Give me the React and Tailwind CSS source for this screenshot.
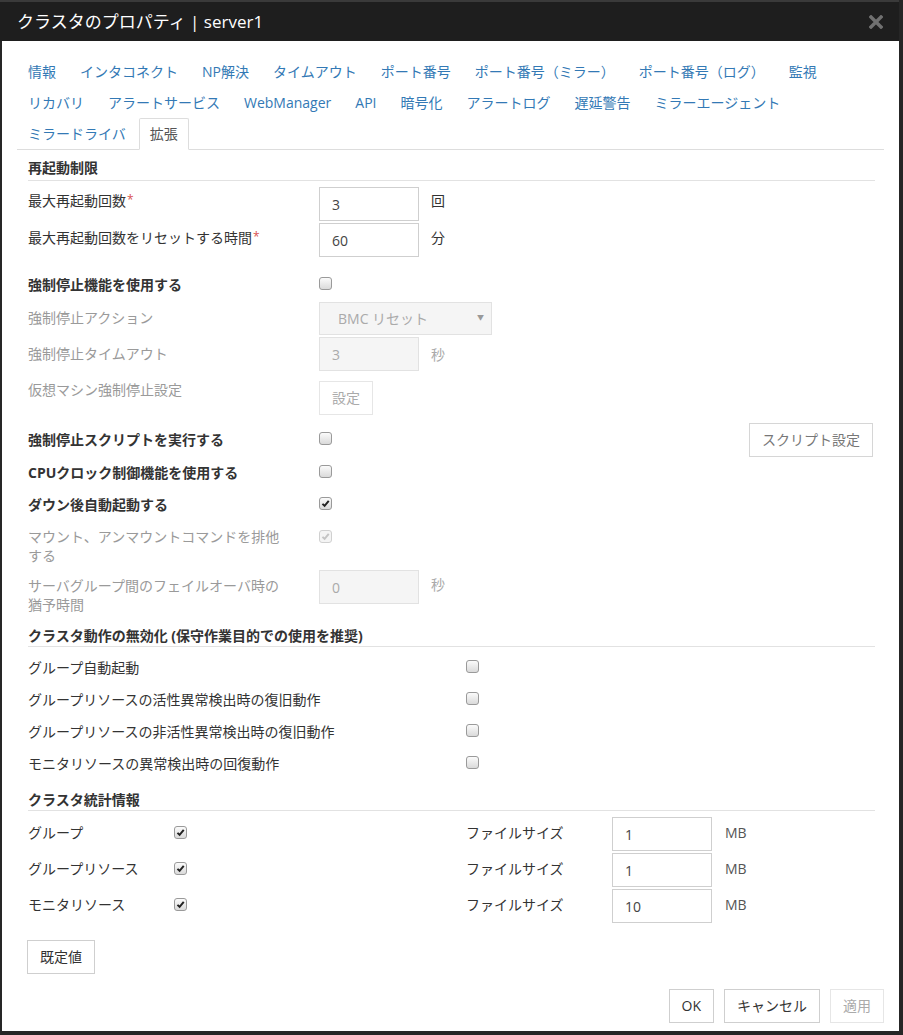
import React from "react";

const font = "font-['Open_Sans','Noto_Sans_CJK_JP',sans-serif]";

const Checkbox = ({ checked, disabled }) => {
  return (
    <span
      className={`inline-flex w-[13px] h-[13px] shrink-0 rounded-[3px] border items-center justify-center ${
        disabled
          ? "border-[#d0d0d0] bg-[#f4f4f4]"
          : "border-[#9a9a9a] bg-linear-to-b from-[#fbfbfb] to-[#dadada]"
      }`}
    >
      {checked && (
        <svg viewBox="0 0 10 10" className="w-[9px] h-[9px]">
          <path
            d="M1.6 5.4 L4 7.6 L8.6 2.2"
            fill="none"
            stroke={disabled ? "#c4c4c4" : "#222"}
            strokeWidth="2.2"
          />
        </svg>
      )}
    </span>
  );
};

const Req = () => (
  <sup className="text-[#d9534f] text-[12px] relative -top-[2px] ml-[1px]">*</sup>
);

const TextBox = ({ value, disabled }) => (
  <div
    className={`w-[100px] h-[34px] border flex items-center pl-[12px] text-[14px] ${
      disabled
        ? "bg-[#f5f5f5] border-[#e2e2e2] text-[#aaa]"
        : "bg-white border-[#cfcfcf] text-[#444]"
    }`}
  >
    {value}
  </div>
);

const Btn = ({ children, disabled, muted, className = "" }) => (
  <button
    className={`h-[34px] px-[12px] border bg-white text-[14px] leading-[20px] ${
      disabled
        ? "border-[#e6e6e6] text-[#aaa]"
        : muted
        ? "border-[#d6d6d6] text-[#777]"
        : "border-[#cfcfcf] text-[#333]"
    } ${className}`}
  >
    {children}
  </button>
);

const Heading = ({ children, className = "" }) => (
  <div
    className={`mr-[-2px] border-b border-[#e2e2e2] font-bold text-[14px] leading-[20px] text-[#333] ${className}`}
  >
    {children}
  </div>
);

const tabRows = [
  ["情報", "インタコネクト", "NP解決", "タイムアウト", "ポート番号", "ポート番号（ミラー）", "ポート番号（ログ）", "監視"],
  ["リカバリ", "アラートサービス", "WebManager", "API", "暗号化", "アラートログ", "遅延警告", "ミラーエージェント"],
  ["ミラードライバ", "拡張"],
];

const Tabs = () => {
  return (
    <div className="border-b border-[#dddddd]">
      {tabRows.map((row, i) => (
        <div key={i} className="flex">
          {row.map((t) => {
            const active = t === "拡張";
            return (
              <div
                key={t}
                className={`h-[31px] px-[10px] mr-[2px] flex items-center text-[14px] leading-[20px] border ${
                  active
                    ? "border-[#dddddd] border-b-white bg-white text-[#555] -mb-px h-[32px] rounded-t-[2px]"
                    : "border-transparent text-[#3379b5]"
                }`}
              >
                {t}
              </div>
            );
          })}
        </div>
      ))}
    </div>
  );
};

export default function App() {
  return (
    <div className={`w-[903px] h-[1035px] overflow-hidden bg-[#262626] pl-[2px] ${font}`}>
      <div className="w-[897px] h-[1031px] bg-white flex flex-col">
        {/* title */}
        <div className="h-[41px] bg-[#1e1e1e] border-t-2 border-[#3a3a3a] -ml-[2px] pl-[17px] pr-[16px] flex items-center justify-between">
          <span className="text-white text-[17px] leading-[24px]">クラスタのプロパティ | server1</span>
          <svg viewBox="0 0 14 14" className="w-[14px] h-[14px]">
            <path d="M2 2 L12 12 M12 2 L2 12" stroke="#707070" strokeWidth="3.4" strokeLinecap="square" />
          </svg>
        </div>

        <div className="px-[15px] pt-[15px] text-[#333] text-[14px]">
          <Tabs />

          <div className="pl-[11px] pr-[11px]">
            <Heading className="pt-[8px] pb-[2px]">再起動制限</Heading>

            <div className="flex items-start mt-[6px] h-[34px]">
              <div className="w-[291px] pt-[4px] leading-[20px]">
                最大再起動回数<Req />
              </div>
              <TextBox value="3" />
              <span className="ml-[12px] pt-[4px] leading-[20px]">回</span>
            </div>
            <div className="flex items-start mt-[2px] h-[34px]">
              <div className="w-[291px] pt-[5px] leading-[20px]">
                最大再起動回数をリセットする時間<Req />
              </div>
              <TextBox value="60" />
              <span className="ml-[12px] pt-[5px] leading-[20px]">分</span>
            </div>

            <div className="flex items-center mt-[12px] h-[32px]">
              <div className="w-[291px] font-bold leading-[20px]">強制停止機能を使用する</div>
              <span className="flex -mt-[3px]">
                <Checkbox />
              </span>
            </div>
            <div className="flex items-center h-[34px]">
              <div className="w-[291px] leading-[20px] text-[#9a9a9a]">強制停止アクション</div>
              <div className="w-[173px] h-[33px] bg-[#f5f5f5] border border-[#e2e2e2] flex items-center justify-between pl-[18px] pr-[7px] text-[#aaa]">
                <span>BMC リセット</span>
                <span className="text-[7px] text-[#999]">▼</span>
              </div>
            </div>
            <div className="flex items-center mt-[2px] h-[34px]">
              <div className="w-[291px] leading-[20px] text-[#9a9a9a]">強制停止タイムアウト</div>
              <TextBox value="3" disabled />
              <span className="ml-[12px] text-[#aaa]">秒</span>
            </div>
            <div className="flex items-start mt-[9px] h-[34px]">
              <div className="w-[291px] leading-[20px] text-[#9a9a9a]">仮想マシン強制停止設定</div>
              <Btn disabled className="mt-[1px] h-[33px]">設定</Btn>
            </div>

            <div className="flex items-center mt-[9px] h-[34px]">
              <div className="w-[291px] font-bold leading-[20px]">強制停止スクリプトを実行する</div>
              <span className="flex -mt-[3px]">
                <Checkbox />
              </span>
              <div className="flex-1" />
              <Btn muted>スクリプト設定</Btn>
            </div>
            <div className="flex items-center h-[32px]">
              <div className="w-[291px] font-bold leading-[20px]">CPUクロック制御機能を使用する</div>
              <span className="flex -mt-[3px]">
                <Checkbox />
              </span>
            </div>
            <div className="flex items-center h-[32px]">
              <div className="w-[291px] font-bold leading-[20px]">ダウン後自動起動する</div>
              <span className="flex -mt-[3px]">
                <Checkbox checked />
              </span>
            </div>
            <div className="flex items-start mt-[6px] h-[38px]">
              <div className="w-[291px] leading-[19px] text-[#9a9a9a]">
                <div className="w-[258px]">マウント、アンマウントコマンドを排他する</div>
              </div>
              <span className="mt-[3px] flex">
                <Checkbox checked disabled />
              </span>
            </div>
            <div className="flex items-start mt-[5px] h-[44px]">
              <div className="w-[291px] pt-[6px] leading-[19px] text-[#9a9a9a]">
                <div className="w-[258px]">サーバグループ間のフェイルオーバ時の猶予時間</div>
              </div>
              <TextBox value="0" disabled />
              <span className="ml-[12px] pt-[5px] leading-[20px] text-[#aaa]">秒</span>
            </div>

            <Heading className="pt-[12px]">クラスタ動作の無効化 (保守作業目的での使用を推奨)</Heading>
            <div className="mt-[5px]">
              {[
                "グループ自動起動",
                "グループリソースの活性異常検出時の復旧動作",
                "グループリソースの非活性異常検出時の復旧動作",
                "モニタリソースの異常検出時の回復動作",
              ].map((l) => (
                <div key={l} className="flex items-center h-[32px]">
                  <div className="w-[438px] leading-[20px]">{l}</div>
                  <span className="flex -mt-[3px]">
                    <Checkbox />
                  </span>
                </div>
              ))}
            </div>

            <Heading className="pt-[10px]">クラスタ統計情報</Heading>
            <div className="mt-[6px] flex flex-col gap-[2px]">
              {[
                ["グループ", "1"],
                ["グループリソース", "1"],
                ["モニタリソース", "10"],
              ].map(([l, v]) => (
                <div key={l} className="flex items-center h-[34px]">
                  <div className="w-[146px] leading-[20px] -mt-[2px]">{l}</div>
                  <div className="w-[292px] flex -mt-[4px]">
                    <Checkbox checked />
                  </div>
                  <div className="w-[146px] leading-[20px] -mt-[2px]">ファイルサイズ</div>
                  <TextBox value={v} />
                  <span className="ml-[13px] text-[#555] -mt-[3px]">MB</span>
                </div>
              ))}
            </div>

            <div className="mt-[17px] -ml-px">
              <Btn className="h-[33px]">既定値</Btn>
            </div>
          </div>

          <div className="mt-[15px] flex justify-end gap-[10px]">
            <Btn>OK</Btn>
            <Btn>キャンセル</Btn>
            <Btn disabled>適用</Btn>
          </div>
        </div>
      </div>
    </div>
  );
}
